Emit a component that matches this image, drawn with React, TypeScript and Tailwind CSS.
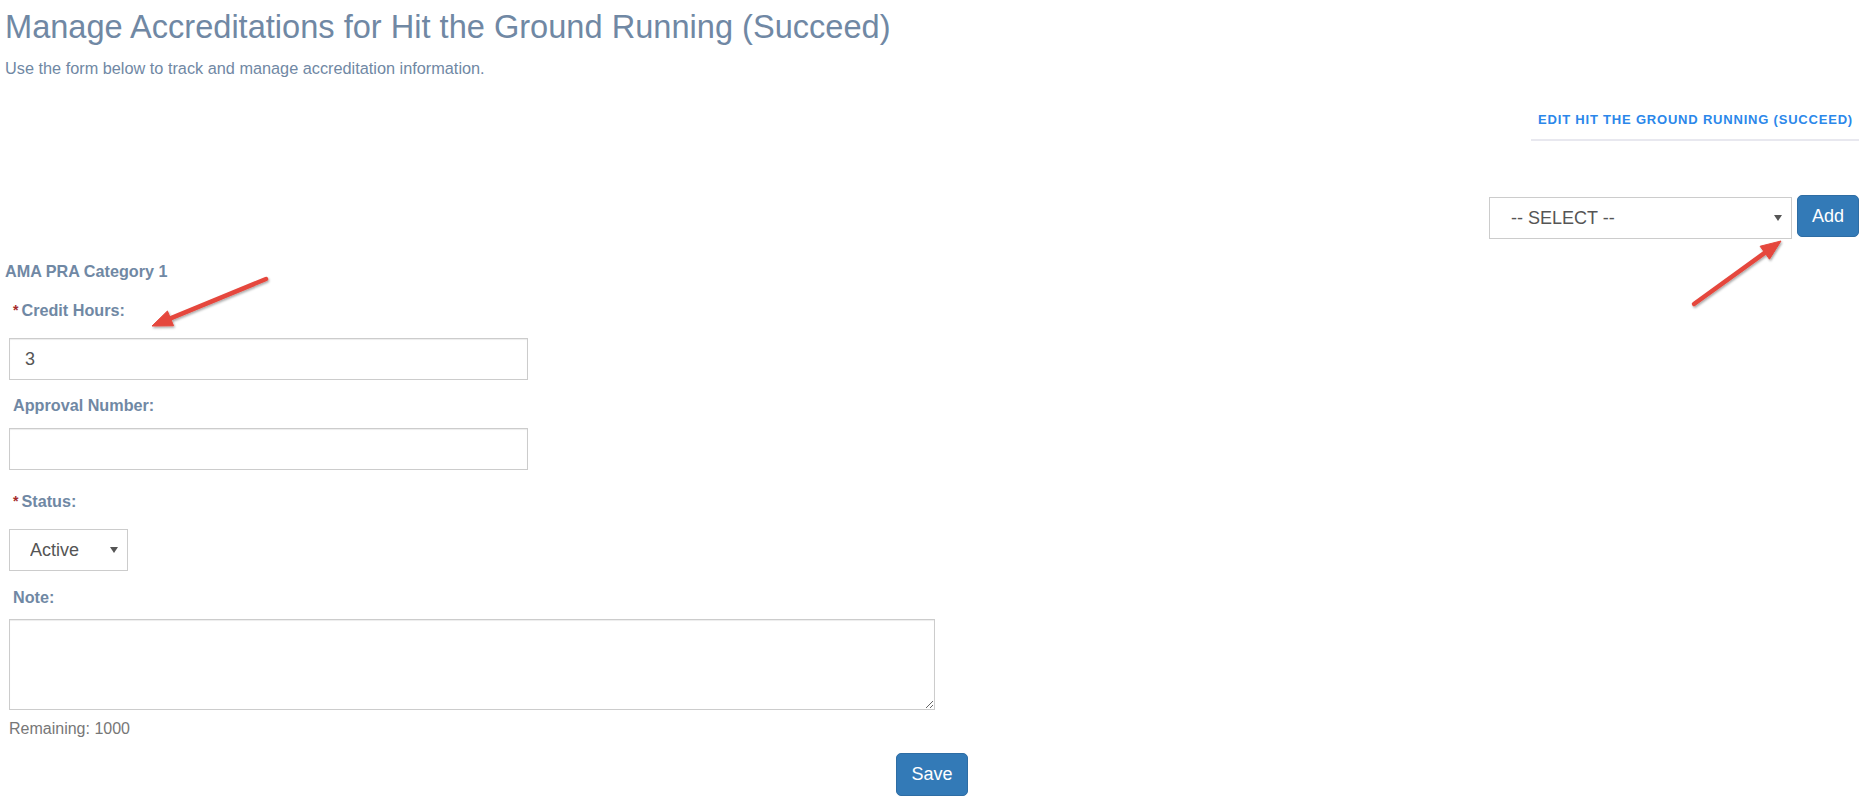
import { useState } from "react";

// Red callout arrow drawn over the page
type Pt = { x: number; y: number };

const Arrow = ({ from, to }: { from: Pt; to: Pt }) => {
  const dx = to.x - from.x;
  const dy = to.y - from.y;
  const len = Math.sqrt(dx * dx + dy * dy);
  const ux = dx / len;
  const uy = dy / len;
  const headLen = 20;
  const half = 8;
  const bx = to.x - ux * headLen;
  const by = to.y - uy * headLen;
  const nx = -uy;
  const ny = ux;
  const head = `${to.x},${to.y} ${bx + nx * half},${by + ny * half} ${bx - nx * half},${by - ny * half}`;

  return (
    <g filter="url(#arrowShadow)">
      <line
        x1={from.x}
        y1={from.y}
        x2={bx + ux * 2}
        y2={by + uy * 2}
        stroke="#e5473d"
        strokeWidth={4.5}
        strokeLinecap="round"
      />
      <polygon points={head} fill="#e5473d" stroke="#e5473d" strokeWidth={1} strokeLinejoin="round" />
    </g>
  );
};

const Caret = () => (
  <svg
    className="pointer-events-none absolute top-1/2 -translate-y-1/2 right-[10px]"
    width="8"
    height="6"
    viewBox="0 0 8 6"
  >
    <path d="M0 0 L8 0 L4 6 Z" fill="#555" />
  </svg>
);

const Required = () => (
  <span className="text-[14px] font-bold text-[#a52a2a] mr-[3px] align-top">*</span>
);

const App = () => {
  const [credit, setCredit] = useState("3");
  const [approval, setApproval] = useState("");
  const [status, setStatus] = useState("Active");
  const [note, setNote] = useState("");
  const [type, setType] = useState("");

  const labelCls = "block pl-[4px] text-[16.2px] leading-[20px] font-bold text-[#7088a4]";
  const inputCls =
    "block h-[42px] border border-[#cccccc] bg-white px-[15px] text-[18px] text-[#555] outline-none shadow-[inset_0_1px_1px_rgba(0,0,0,0.075)]";

  return (
    <div
      className="relative min-h-[806px] bg-white pl-[5px] pr-[3px]"
      style={{ fontFamily: '"Liberation Sans", Arial, sans-serif' }}
    >
      {/* Heading */}
      <h1 className="pt-[9px] text-[32.6px] leading-[36px] font-normal text-[#7088a4]">
        Manage Accreditations for Hit the Ground Running (Succeed)
      </h1>
      <p className="mt-[13px] text-[16.3px] leading-[20px] text-[#7088a4]">
        Use the form below to track and manage accreditation information.
      </p>

      {/* Edit link */}
      <div className="mt-[34px] flex justify-end">
        <a
          href="#"
          className="block border-b-2 border-[#e8e8ef] pl-[7px] pr-[6px] pb-[11px] text-[13px] leading-[16px] font-bold uppercase tracking-[0.8px] text-[#2b87ea]"
        >
          Edit Hit the Ground Running (Succeed)
        </a>
      </div>

      {/* Accreditation picker */}
      <div className="mt-[54px] flex items-start justify-end gap-[5px]">
        <div className="relative mt-[2px]">
          <select
            value={type}
            onChange={(e) => setType(e.target.value)}
            className="block h-[42px] w-[303px] appearance-none border border-[#cccccc] bg-white pl-[21px] text-[18px] text-[#555] outline-none"
          >
            <option value="">-- SELECT --</option>
            <option value="ama">AMA PRA Category 1</option>
          </select>
          <Caret />
        </div>
        <button className="h-[42px] rounded-[5px] border border-[#2e6da4] bg-[#337ab7] px-[14px] text-[18px] text-white">
          Add
        </button>
      </div>

      {/* Form */}
      <h2 className="mt-[22px] text-[16.2px] leading-[20px] font-bold text-[#7088a4]">
        AMA PRA Category 1
      </h2>

      <form className="pl-[4px]" onSubmit={(e) => e.preventDefault()}>
        <label className={`${labelCls} mt-[19px]`}>
          <Required />
          Credit Hours:
        </label>
        <input
          value={credit}
          onChange={(e) => setCredit(e.target.value)}
          className={`${inputCls} mt-[18px] w-[519px]`}
        />

        <label className={`${labelCls} mt-[15px]`}>Approval Number:</label>
        <input
          value={approval}
          onChange={(e) => setApproval(e.target.value)}
          className={`${inputCls} mt-[13px] w-[519px]`}
        />

        <label className={`${labelCls} mt-[21px]`}>
          <Required />
          Status:
        </label>
        <div className="relative mt-[18px] w-[119px]">
          <select
            value={status}
            onChange={(e) => setStatus(e.target.value)}
            className="block h-[42px] w-[119px] appearance-none border border-[#cccccc] bg-white pl-[20px] text-[18px] text-[#555] outline-none"
          >
            <option>Active</option>
            <option>Inactive</option>
          </select>
          <Caret />
        </div>

        <label className={`${labelCls} mt-[16px]`}>Note:</label>
        <textarea
          value={note}
          onChange={(e) => setNote(e.target.value)}
          className="mt-[12px] block h-[91px] w-[926px] border border-[#cccccc] bg-white p-[8px] text-[16px] text-[#555] outline-none shadow-[inset_0_1px_1px_rgba(0,0,0,0.075)]"
        />
        <div className="mt-[9px] text-[16px] leading-[20px] text-[#777]">
          Remaining: {1000 - note.length}
        </div>
      </form>

      <div className="mt-[14px] flex justify-center">
        <button className="h-[43px] rounded-[5px] border border-[#2e6da4] bg-[#337ab7] px-[14px] text-[18px] text-white">
          Save
        </button>
      </div>

      {/* Callout arrows */}
      <svg
        className="pointer-events-none absolute left-0 top-0"
        width="1862"
        height="806"
        viewBox="0 0 1862 806"
      >
        <defs>
          <filter id="arrowShadow" x="-20%" y="-20%" width="140%" height="140%">
            <feDropShadow dx="1" dy="1.5" stdDeviation="1.2" floodColor="#000" floodOpacity="0.35" />
          </filter>
        </defs>
        <Arrow from={{ x: 266, y: 279 }} to={{ x: 152, y: 326 }} />
        <Arrow from={{ x: 1694, y: 304 }} to={{ x: 1781, y: 241 }} />
      </svg>
    </div>
  );
};

export default App;
